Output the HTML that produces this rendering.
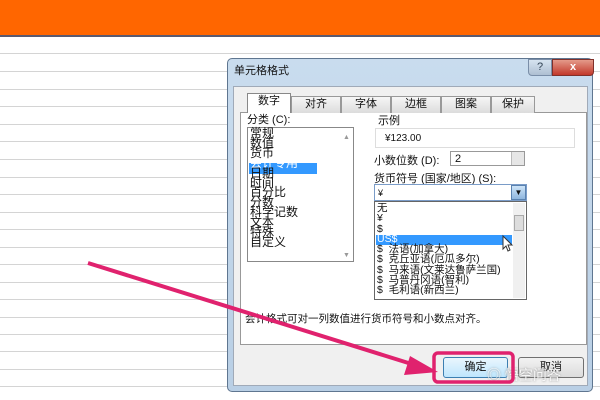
<!DOCTYPE html>
<html><head><meta charset="utf-8"><style>
*{margin:0;padding:0;box-sizing:border-box}
body{width:600px;height:400px;overflow:hidden;background:#fff;position:relative;font-family:"Liberation Sans","Noto Sans CJK SC",sans-serif;font-size:11px;color:#111}
.a{position:absolute}
.hl{position:absolute;left:0;width:600px;height:1px;background:#d4d4d4}
.t{position:absolute;font-size:11px;line-height:11px;white-space:nowrap}
.tab{position:absolute;top:96px;height:17px;background:linear-gradient(#f6f6f6,#dcdcdc);border:1px solid #999;border-bottom:none;font-size:11px;text-align:center;line-height:15px}
</style></head><body>
<div class="a" style="left:0;top:0;width:600px;height:35px;background:#ff6600"></div>
<div class="a" style="left:0;top:35px;width:600px;height:2px;background:#5a5a70"></div>
<div class="hl" style="top:53px"></div><div class="hl" style="top:71px"></div><div class="hl" style="top:89px"></div><div class="hl" style="top:106px"></div><div class="hl" style="top:124px"></div><div class="hl" style="top:141px"></div><div class="hl" style="top:159px"></div><div class="hl" style="top:177px"></div><div class="hl" style="top:194px"></div><div class="hl" style="top:212px"></div><div class="hl" style="top:229px"></div><div class="hl" style="top:247px"></div><div class="hl" style="top:264px"></div><div class="hl" style="top:282px"></div><div class="hl" style="top:299px"></div><div class="hl" style="top:317px"></div><div class="hl" style="top:334px"></div><div class="hl" style="top:351px"></div><div class="hl" style="top:369px"></div><div class="hl" style="top:386px"></div>
<div class="a" style="left:227px;top:58px;width:366px;height:334px;background:linear-gradient(#c9dcee,#b9cfe5);border:1px solid #5f7690;border-radius:5px"></div>
<div class="t" style="left:234px;top:66px">单元格格式</div>
<div class="a" style="left:528px;top:59px;width:24px;height:17px;background:linear-gradient(#d6e3f0,#aebfd2);border:1px solid #7a8ea8;border-radius:0 0 0 4px;text-align:center;font-size:11px;line-height:15px;color:#345">?</div>
<div class="a" style="left:552px;top:59px;width:42px;height:17px;background:linear-gradient(#e49a8a,#c2382a);border:1px solid #80302a;border-radius:0 0 4px 0;text-align:center;color:#fff;font-weight:bold;font-size:11px;line-height:15px">x</div>
<div class="a" style="left:233px;top:86px;width:355px;height:300px;background:#f0f0f0;border:1px solid #a0aab8"></div>
<div class="a" style="left:240px;top:112px;width:347px;height:233px;background:#fff;border:1px solid #999"></div>
<div class="tab" style="left:247px;top:93px;width:44px;height:20px;background:#fff;border-color:#888">数字</div>
<div class="tab" style="left:291px;width:50px">对齐</div>
<div class="tab" style="left:341px;width:50px">字体</div>
<div class="tab" style="left:391px;width:50px">边框</div>
<div class="tab" style="left:441px;width:50px">图案</div>
<div class="tab" style="left:491px;width:44px">保护</div>
<div class="t" style="left:247px;top:115px">分类 (C):</div>
<div class="a" style="left:247px;top:127px;width:107px;height:135px;border:1px solid #888;background:#fff"></div>
<div class="a" style="left:249px;top:163px;width:68px;height:11px;background:#3399ff"></div>
<div class="t" style="left:250px;top:129px;line-height:9.9px;font-size:12px">常规<br>数值<br>货币<br><span style="color:#fff">会计专用</span><br>日期<br>时间<br>百分比<br>分数<br>科学记数<br>文本<br>特殊<br>自定义</div>
<div class="t" style="left:343px;top:132px;font-size:7px;color:#999">▲</div>
<div class="t" style="left:343px;top:250px;font-size:7px;color:#999">▼</div>
<div class="t" style="left:378px;top:116px">示例</div>
<div class="a" style="left:375px;top:128px;width:200px;height:20px;border:1px solid #ddd"></div>
<div class="t" style="left:385px;top:133px;font-size:10px">¥123.00</div>
<div class="t" style="left:374px;top:156px">小数位数 (D):</div>
<div class="a" style="left:450px;top:151px;width:75px;height:15px;border:1px solid #999;background:#fff"></div>
<div class="t" style="left:455px;top:154px">2</div>
<div class="a" style="left:511px;top:152px;width:13px;height:13px;background:#e6e6e6;border-left:1px solid #bbb"></div>
<div class="t" style="left:374px;top:174px">货币符号 (国家/地区) (S):</div>
<div class="a" style="left:374px;top:184px;width:153px;height:17px;border:1px solid #7a9cc8;background:#fff"></div>
<div class="t" style="left:378px;top:188px;font-size:9px">¥</div>
<div class="a" style="left:511px;top:185px;width:15px;height:15px;background:linear-gradient(#cde4f8,#8fb6de);border:1px solid #5a82b0;text-align:center;font-size:8px;line-height:13px">▼</div>
<div class="a" style="left:374px;top:201px;width:153px;height:99px;border:1px solid #666;background:#fff"></div>
<div class="a" style="left:376px;top:235px;width:136px;height:10px;background:#3399ff"></div>
<div class="t" style="left:377px;top:203px;line-height:10.3px;font-size:10.5px">无<br>¥<br>$<br><span style="color:#fff">US$</span><br>$&nbsp; 法语(加拿大)<br>$&nbsp; 克丘亚语(厄瓜多尔)<br>$&nbsp; 马来语(文莱达鲁萨兰国)<br>$&nbsp; 马普丹冈语(智利)<br>$&nbsp; 毛利语(新西兰)</div>
<div class="a" style="left:513px;top:203px;width:12px;height:95px;background:#f0f0f0"></div>
<div class="a" style="left:514px;top:215px;width:10px;height:16px;background:#ddd;border:1px solid #aaa"></div>
<div class="t" style="left:245px;top:314px;font-size:10.5px">会计格式可对一列数值进行货币符号和小数点对齐。</div>
<div class="a" style="left:443px;top:357px;width:65px;height:21px;border:1px solid #3c7fb1;border-radius:3px;background:linear-gradient(#eaf6fd,#bee6fd);text-align:center;line-height:19px">确定</div>
<div class="a" style="left:518px;top:357px;width:66px;height:21px;border:1px solid #707070;border-radius:3px;background:linear-gradient(#f2f2f2,#dcdcdc);text-align:center;line-height:19px">取消</div>
<div class="t" style="left:487px;top:368px;font-size:14px;line-height:14px;color:rgba(255,255,255,.85);text-shadow:0 0 2px #888">◎ 悟空问答</div>
<svg class="a" style="left:0;top:0" width="600" height="400">
<rect x="434" y="353" width="79" height="29" rx="4" fill="none" stroke="#e0226e" stroke-width="3.5"/>
<line x1="88" y1="263" x2="418" y2="366" stroke="#e0226e" stroke-width="4"/>
<polygon points="438,372 410,356 404,375" fill="#e0226e"/>
<path d="M503 236 l0 13 l3 -3 l2 5 l2 -1 l-2 -5 l4 0 z" fill="#fff" stroke="#333" stroke-width="1"/>
</svg>
</body></html>
